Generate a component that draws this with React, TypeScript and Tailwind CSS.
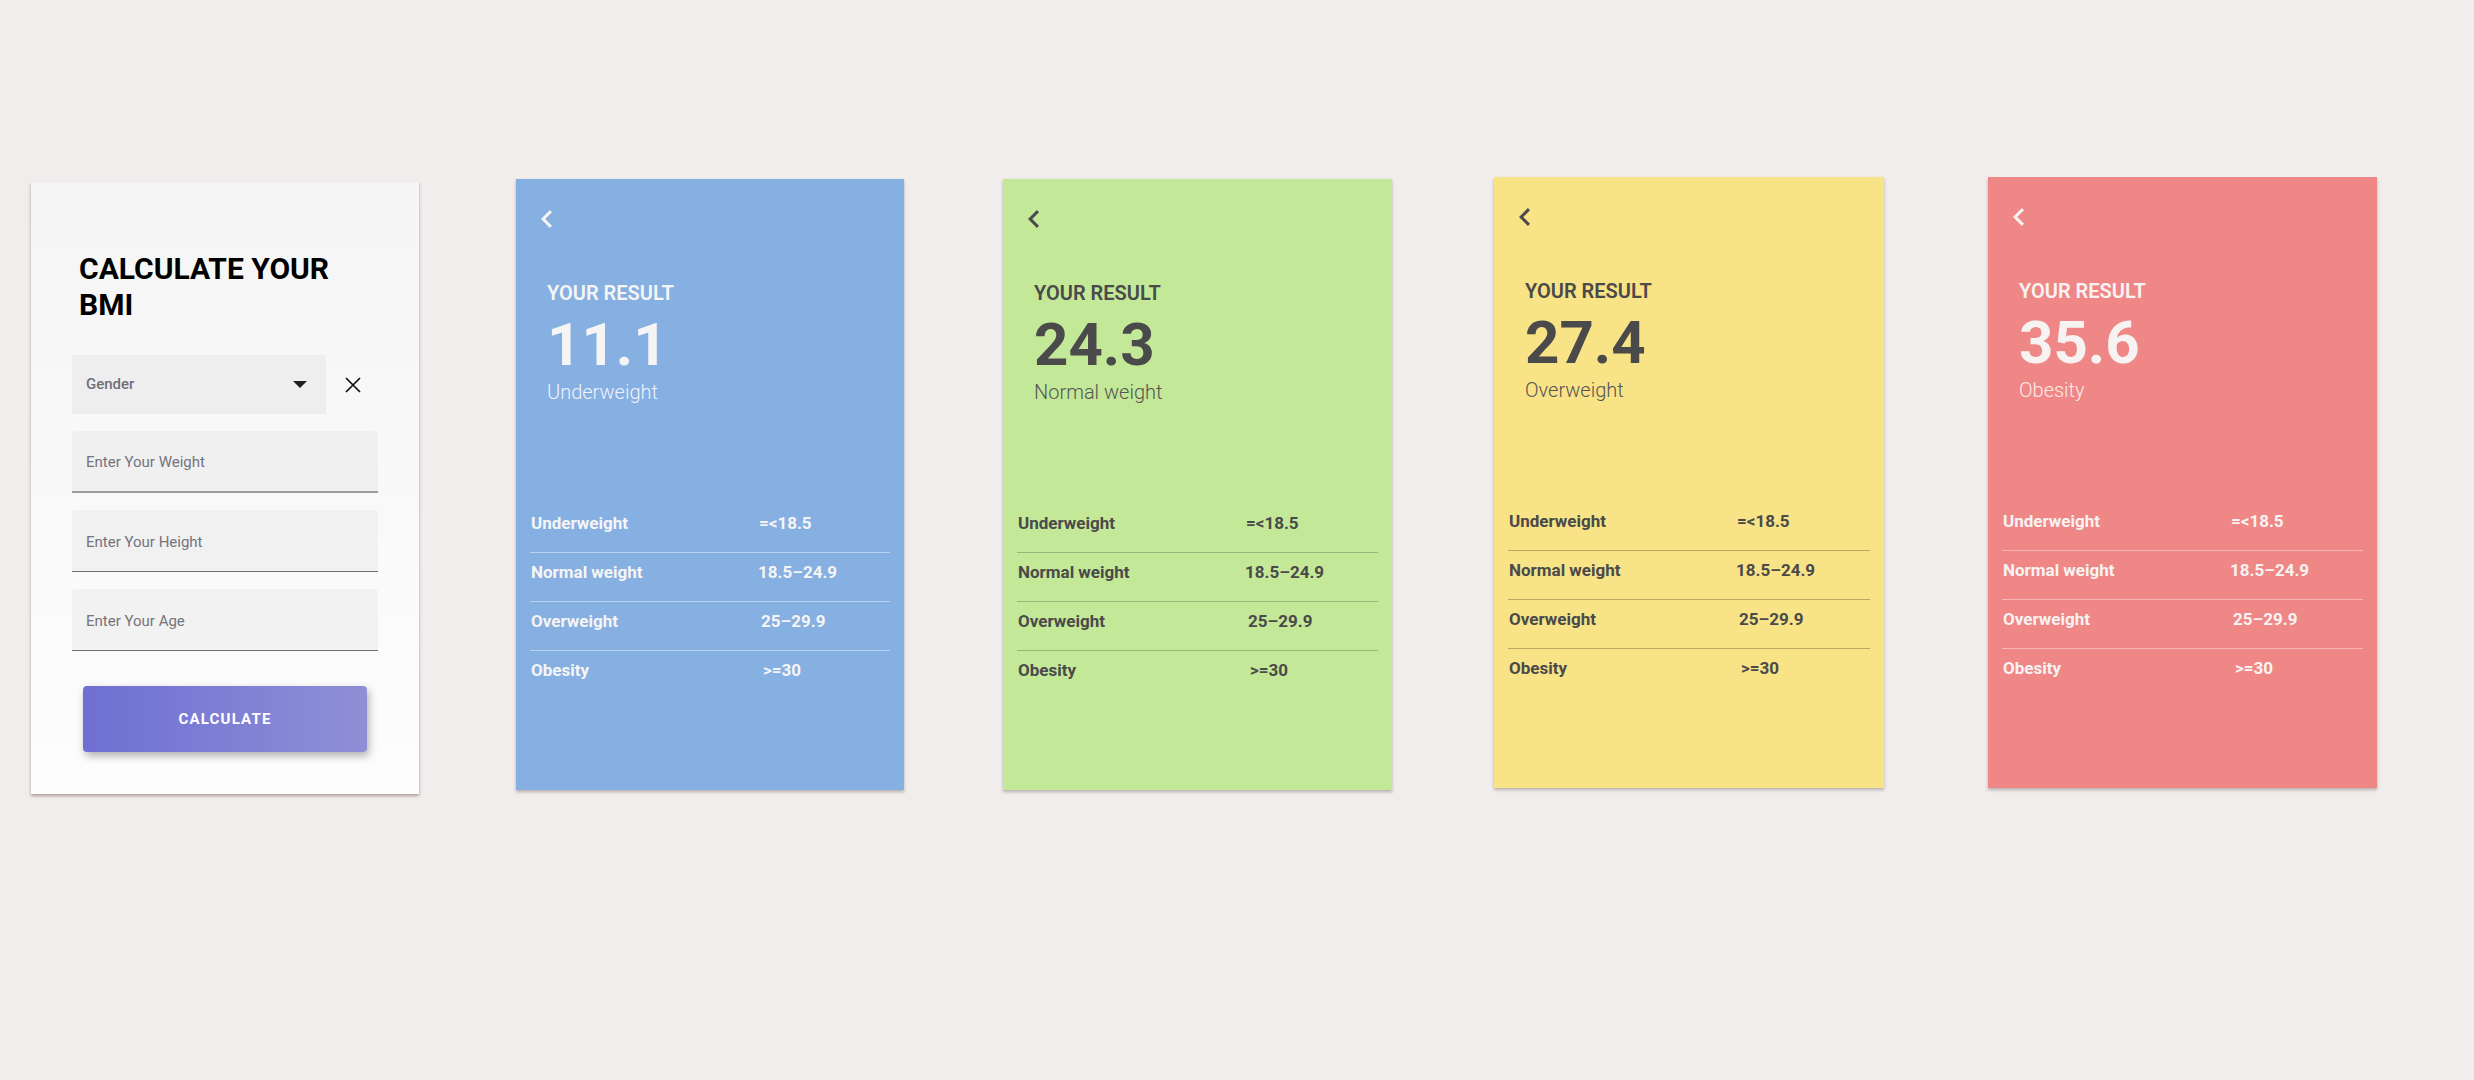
import React from "react";

const ranges = [
    { label: "Underweight", value: "=<18.5", shift: "ml-0" },
    { label: "Normal weight", value: "18.5–24.9", shift: "-ml-px" },
    { label: "Overweight", value: "25–29.9", shift: "ml-[2px]" },
    { label: "Obesity", value: ">=30", shift: "ml-[4px]" },
];

const results = [
    {
        value: "11.1",
        label: "Underweight",
        card: "w-[388px] bg-[#86afe2] text-[#f5f5f5] ml-[97px] mt-[2px]",
        line: "border-[#bcd3f0]",
        sub: "text-[#eef3fb]",
    },
    {
        value: "24.3",
        label: "Normal weight",
        card: "w-[389px] bg-[#c3e898] text-[#4a4a4a] ml-[99px] mt-[2px]",
        line: "border-[#98b57a]",
        sub: "text-[#555555]",
    },
    {
        value: "27.4",
        label: "Overweight",
        card: "w-[390px] bg-[#f8e387] text-[#4a4a4a] ml-[102px] mt-0",
        line: "border-[#b9aa6a]",
        sub: "text-[#555555]",
    },
    {
        value: "35.6",
        label: "Obesity",
        card: "w-[389px] bg-[#ef8786] text-[#f7f3f3] ml-[104px] mt-0",
        line: "border-[#f5b6b5]",
        sub: "text-[#fbeaea]",
    },
];

const ChevronLeft = ({ className }) => (
    <svg viewBox="8 6 7.41 12" className={className} fill="currentColor">
        <path d="M15.41 7.41L14 6l-6 6 6 6 1.41-1.41L10.83 12z" />
    </svg>
);

const CalculatorCard = () => {
    return (
        <div className="mt-[5px] w-[388px] h-[612px] shrink-0 bg-gradient-to-b from-[#f5f5f5] to-[#fdfdfd] pt-[69px] px-[41px] shadow-[0_2px_3px_rgba(90,60,60,0.45)]">
            <h1 className="pl-[7px] w-[290px] text-[30px] leading-[36px] font-bold text-black">
                CALCULATE YOUR BMI
            </h1>
            <div className="mt-[32px] flex items-center">
                <div className="w-[254px] h-[59px] bg-[#eeeeee] pl-[14px] pr-[19px] flex items-center justify-between">
                    <span className="text-[15px] font-medium text-[#6f6f78]">Gender</span>
                    <svg width="14" height="7" viewBox="0 0 14 7">
                        <path d="M0 0h14L7 7z" fill="#1f1f1f" />
                    </svg>
                </div>
                <svg className="ml-[19px]" width="16" height="16" viewBox="0 0 16 16">
                    <path d="M1 1L15 15M15 1L1 15" stroke="#111" strokeWidth="1.7" />
                </svg>
            </div>
            <input
                placeholder="Enter Your Weight"
                className="mt-[17px] block w-full h-[62px] rounded-t-[4px] bg-[#f0f0f0] border-b-2 border-[#9e9e9e] pl-[14px] pt-[2px] text-[15px] outline-none placeholder:text-[#74747c]"
            />
            <input
                placeholder="Enter Your Height"
                className="mt-[17px] block w-full h-[62px] rounded-t-[4px] bg-[#f1f1f1] border-b border-[#6f6f6f] pl-[14px] pt-[2px] text-[15px] outline-none placeholder:text-[#74747c]"
            />
            <input
                placeholder="Enter Your Age"
                className="mt-[17px] block w-full h-[62px] rounded-t-[4px] bg-[#f2f2f2] border-b border-[#6f6f6f] pl-[14px] pt-[2px] text-[15px] outline-none placeholder:text-[#74747c]"
            />
            <button className="mt-[35px] mx-[11px] w-[284px] h-[66px] rounded-[4px] bg-gradient-to-r from-[#6f6fd3] to-[#8f8fd6] text-white text-[15px] font-bold tracking-[1.2px] shadow-[2px_4px_8px_rgba(0,0,0,0.3)]">
                CALCULATE
            </button>
        </div>
    );
};

const ResultCard = ({ r }) => {
    return (
        <div className={`h-[611px] shrink-0 flex flex-col shadow-[0_2px_3px_rgba(80,60,60,0.35)] ${r.card}`}>
            <ChevronLeft className="mt-[31px] ml-[25px] w-[11px] h-[18px]" />
            <div className="ml-[31px] mt-[53px]">
                <div className="text-[20px] leading-[24px] font-semibold">YOUR RESULT</div>
                <div className="mt-[10px] text-[60px] leading-[60px] font-bold">{r.value}</div>
                <div className={`mt-[5px] text-[20px] leading-[24px] font-light ${r.sub}`}>{r.label}</div>
            </div>
            <div className="mx-[14px] mt-[100px]">
                {ranges.map((row, i) => (
                    <div
                        key={row.label}
                        className={`flex pt-[7px] pb-[17px] text-[17px] leading-[24px] font-bold ${i < ranges.length - 1 ? "border-b " + r.line : ""}`}
                    >
                        <span className="w-[229px] pl-px">{row.label}</span>
                        <span className={row.shift}>{row.value}</span>
                    </div>
                ))}
            </div>
        </div>
    );
};

const App = () => {
    return (
        <div className="min-h-[1080px] w-full bg-[#f1eded] font-['Roboto',sans-serif]">
            <div className="flex items-start pt-[177px] pl-[31px]">
                <CalculatorCard />
                {results.map((r) => (
                    <ResultCard key={r.value} r={r} />
                ))}
            </div>
        </div>
    );
};

export default App;
